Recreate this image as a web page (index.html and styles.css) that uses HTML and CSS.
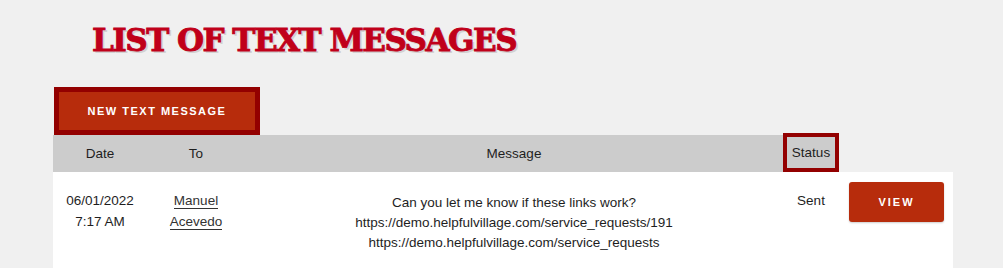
FILE: index.html
```html
<!DOCTYPE html>
<html lang="en">
<head>
<meta charset="utf-8">
<title>List of Text Messages</title>
<link rel="stylesheet" href="styles.css">
</head>
<body>
<div class="page">
  <h1 class="title">LIST OF TEXT MESSAGES</h1>
  <div class="actions">
    <a class="btn-new" href="#">NEW TEXT MESSAGE</a>
  </div>
  <div class="table">
    <div class="thead">
      <div class="th">Date</div>
      <div class="th">To</div>
      <div class="th">Message</div>
      <div class="th th-status">Status</div>
      <div class="th th-empty"></div>
    </div>
    <div class="tr">
      <div class="td">06/01/2022<br>7:17 AM</div>
      <div class="td"><a class="name" href="#">Manuel</a><br><a class="name" href="#">Acevedo</a></div>
      <div class="td td-msg">Can you let me know if these links work?<br>https://demo.helpfulvillage.com/service_requests/191<br>https://demo.helpfulvillage.com/service_requests</div>
      <div class="td">Sent</div>
      <div class="td td-action"><a class="btn-view" href="#">VIEW</a></div>
    </div>
  </div>
</div>
</body>
</html>
```

FILE: styles.css
```css
html, body {
  margin: 0;
  padding: 0;
  background: #f0f0f0;
}

body {
  font-family: "Liberation Sans", Arial, sans-serif;
  font-size: 13.5px;
  color: #222;
}

.page {
  width: 900px;
  margin-left: 53px;
}

.title {
  margin: 0;
  padding: 20px 0 0 39px;
  height: 67px;
  box-sizing: border-box;
  font-family: "DejaVu Serif", serif;
  font-weight: bold;
  font-size: 31px;
  line-height: 40px;
  color: #c0001a;
  -webkit-text-stroke: 0.9px #c0001a;
  text-shadow: 2px 2px 0 #d2d2d2;
  letter-spacing: -1.5px;
}

.actions {
  display: flex;
  margin-top: 20px;
}

.btn-new {
  display: block;
  width: 206px;
  height: 48px;
  box-sizing: border-box;
  margin-left: 1px;
  border: 5px solid #930000;
  background: #b72c0c;
  color: #fff;
  text-decoration: none;
  font-weight: bold;
  font-size: 11px;
  letter-spacing: 1.5px;
  line-height: 38px;
  text-align: center;
}

.thead,
.tr {
  display: grid;
  grid-template-columns: 94px 98px 538px 56px 114px;
}

.thead {
  align-items: end;
  margin-top: -2px;
}

.th {
  height: 37px;
  line-height: 37px;
  background: #cccccc;
  text-align: center;
  color: #1e1e1e;
}

.th-status {
  height: 39px;
  box-sizing: border-box;
  border: 4px solid #930000;
  line-height: 31px;
}

.th-empty {
  background: transparent;
}

.tr {
  background: #fff;
  padding-bottom: 24px;
}

.td {
  padding-top: 19px;
  text-align: center;
  line-height: 20.5px;
  color: #1e1e1e;
}

.td-msg {
  padding-top: 21px;
  line-height: 20px;
}

.name {
  color: #333;
  text-decoration: none;
  border-bottom: 1px solid #333;
}

.td-action {
  padding-top: 10px;
  display: flex;
  justify-content: center;
  align-items: flex-start;
}

.btn-view {
  display: block;
  width: 95px;
  height: 40px;
  border-radius: 3px;
  background: #b72c0c;
  color: #fff;
  text-decoration: none;
  font-weight: bold;
  font-size: 11px;
  letter-spacing: 2px;
  line-height: 40px;
  text-align: center;
  box-shadow: 0 1px 2px rgba(0, 0, 0, 0.2);
  margin-left: 1px;
}
```
